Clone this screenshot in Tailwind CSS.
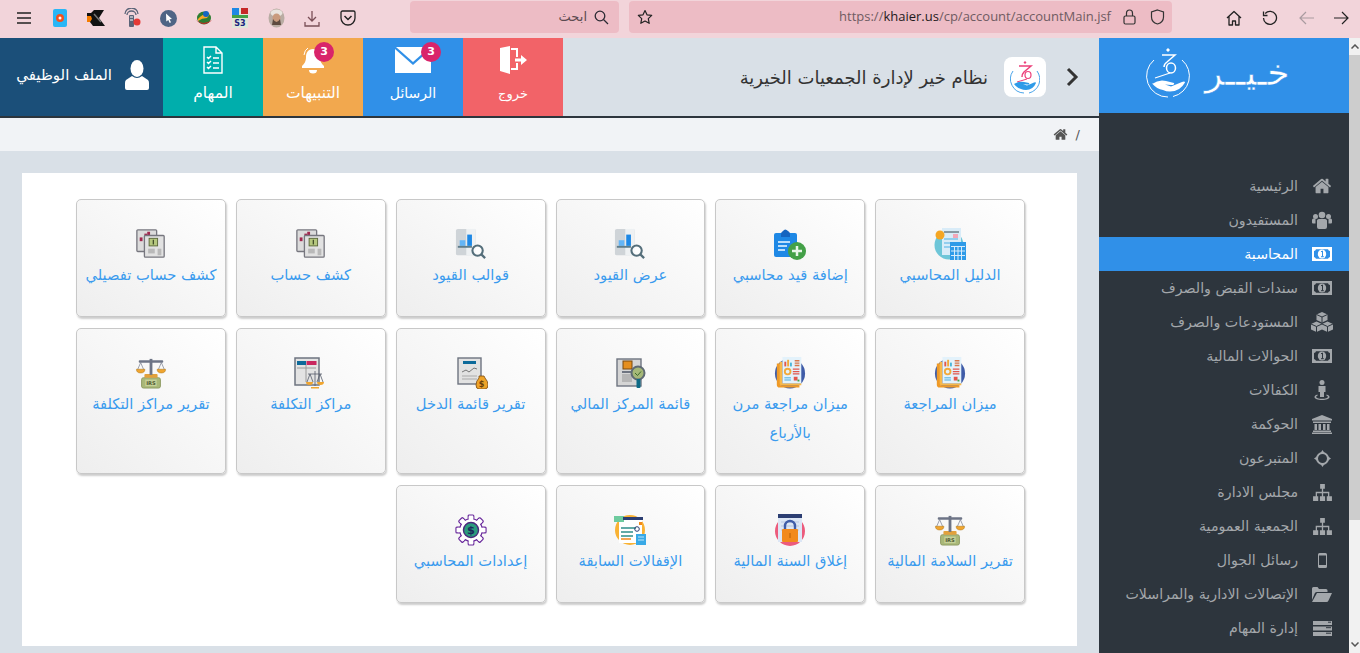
<!DOCTYPE html>
<html lang="ar">
<head>
    <meta charset="UTF-8">
    <title>نظام خير لإدارة الجمعيات الخيرية</title>
    <script src="https://cdn.jsdelivr.net/npm/@tailwindcss/browser@4"></script>
</head>
<body class="[font-family:'DejaVu_Sans',sans-serif] bg-[#d9e0e7]">

<!-- shared icons -->
<svg class="hidden">
    <symbol id="i-home" viewBox="0 0 1792 1792"><path fill="currentColor" d="M1472 992v480q0 26-19 45t-45 19h-384v-384h-256v384h-384q-26 0-45-19t-19-45v-480q0-1 .5-3t.5-3l575-474 575 474q1 2 1 6zm223-69l-62 74q-8 9-21 11h-3q-13 0-21-7l-692-577-692 577q-12 8-24 7-13-2-21-11l-62-74q-8-10-7-23.5t11-21.5l719-599q32-26 76-26t76 26l244 204v-195q0-14 9-23t23-9h192q14 0 23 9t9 23v408l219 182q10 8 11 21.5t-7 23.5z"/></symbol>
    <symbol id="i-money" viewBox="0 0 20 14"><path fill="currentColor" fill-rule="evenodd" d="M0 0h20v14H0zM4 2.2Q3.6 3.6 2 4v6q1.6.4 2 1.800h12q.4-1.400 2-1.800V4q-1.600-.4-2-1.800z"/><ellipse cx="10" cy="7" rx="4.200" ry="4.600" fill="currentColor"/><path d="M9 4.800l1.500-.8v5.600M9 9.700h2.800" fill="none" stroke="#2d353d" stroke-width="1"/></symbol>
    <symbol id="i-sitemap" viewBox="0 0 20 18"><path fill="currentColor" d="M7.500 0h5v5h-5zM0 13h5.500v5H0zM7.250 13h5.500v5h-5.500zM14.500 13H20v5h-5.500zM9.300 5h1.400v3.300h6.500V13h-1.400V9.700h-5.100V13H9.300V9.700H4.200V13H2.800V8.300h6.500z"/></symbol>

    <symbol id="i-search-chart" viewBox="0 0 34 34">
        <rect x="1" y="1" width="21" height="28" rx="2" fill="#cfd4d8"/><rect x="12" y="1" width="10" height="28" fill="#eef1f3"/>
        <rect x="5" y="13" width="6" height="6" fill="#64b5f6"/><rect x="13" y="7" width="5" height="12" fill="#1e88e5"/>
        <rect x="3" y="19" width="15" height="2" fill="#607d8b"/>
        <circle cx="24" cy="24" r="5.500" fill="#fff" fill-opacity=".7" stroke="#546e7a" stroke-width="2.200"/><path d="M28 28l4 4" stroke="#546e7a" stroke-width="2.400"/>
    </symbol>
    <symbol id="i-statement" viewBox="0 0 34 34">
        <rect x="2" y="2" width="21" height="23" rx="1" fill="#dcdcdc" stroke="#77777f" stroke-width="1.400"/>
        <rect x="5" y="10" width="3" height="4" fill="#a2284e"/><rect x="10" y="6" width="3" height="3" fill="#a2284e"/><rect x="13" y="4" width="3" height="4" fill="#a2284e"/>
        <rect x="10" y="8" width="21" height="23" rx="1" fill="#e2e2e2" stroke="#77777f" stroke-width="1.400"/>
        <rect x="15" y="11" width="9" height="8" fill="#b5c77e" stroke="#5c6a3b"/><path d="M19.500 12.500v5" stroke="#44502a" stroke-width="1.400"/>
        <rect x="14" y="22" width="7" height="5" fill="#b9b9b9"/><rect x="24" y="22" width="4" height="7" fill="#b9b9b9"/>
    </symbol>
    <symbol id="i-balance" viewBox="0 0 34 34">
        <circle cx="17" cy="17.500" r="16" fill="#3f5ca8"/>
        <path d="M3 7h4v23h20v2.500H6a3 3 0 0 1-3-3z" fill="#ef9a27"/><path d="M6 5h3v23h20v2H8a2 2 0 0 1-2-2z" fill="#f7b84a"/>
        <rect x="9" y="0" width="20" height="28" fill="#e3f2fb"/>
        <rect x="11" y="5" width="2" height="5" fill="#e2574c"/><rect x="14" y="3" width="2" height="7" fill="#f2a93b"/><rect x="17" y="6" width="2" height="4" fill="#4db6d9"/>
        <path d="M22 4h5M22 6.500h5M22 9h5" stroke="#d9774a" stroke-width="1.500"/>
        <circle cx="14.500" cy="15.500" r="3" fill="none" stroke="#f2a93b" stroke-width="2"/>
        <path d="M20 13h7M20 15.500h7M20 18h7" stroke="#e2574c" stroke-width="1.300"/>
        <path d="M11 22h7M11 24.500h7" stroke="#7cc4ea" stroke-width="1.500"/>
        <rect x="21" y="21" width="4" height="4" fill="#e2574c"/><rect x="25" y="24" width="2" height="2" fill="#43a047"/>
    </symbol>
    <symbol id="i-scale-irs" viewBox="0 0 34 34">
        <rect x="7" y="22" width="20" height="11" rx="2" fill="#a9b878" stroke="#8d9a62"/><rect x="11" y="24" width="12" height="7" fill="#c6d199"/>
        <text x="17" y="30" font-size="5.500" font-weight="700" text-anchor="middle" fill="#4c5630" font-family="'DejaVu Sans'">IRS</text>
        <rect x="10" y="18" width="14" height="4" rx="1" fill="#e2a13b"/>
        <rect x="15.500" y="2" width="3" height="17" fill="#6d7486"/><rect x="4" y="3.500" width="26" height="2.500" rx="1" fill="#6d7486"/>
        <path d="M6 6l-3.500 8M6 6l3.500 8M28 6l-3.500 8M28 6l3.500 8" stroke="#6d7486" stroke-width=".7"/>
        <path d="M1.500 13h9a4.500 4 0 0 1-9 0zM23.500 13h9a4.500 4 0 0 1-9 0z" fill="#f0a52f" stroke="#a86f12" stroke-width=".5"/>
    </symbol>
</svg>

<div class="w-[1360px] h-[653px] overflow-hidden flex flex-col">

    <!-- browser toolbar -->
    <div class="h-[38px] bg-[#f2d4da] flex items-start shrink-0 text-[#2b2a33]">
        <div class="w-[410px] shrink-0 h-[36px] flex items-center pl-[6px]">
            <div class="w-[36px] flex justify-center">
                <svg width="14" height="12" viewBox="0 0 14 12"><path d="M0 1h14M0 6h14M0 11h14" stroke="#222" stroke-width="1.400"/></svg>
            </div>
            <div class="w-[36px] flex justify-center">
                <svg width="14" height="18" viewBox="0 0 14 18"><rect width="14" height="18" rx="2" fill="#29b6f6"/><circle cx="7" cy="9" r="4" fill="#f4511e"/><circle cx="7" cy="9" r="1.500" fill="#fff"/></svg>
            </div>
            <div class="w-[36px] flex justify-center">
                <svg width="18" height="18" viewBox="0 0 18 18"><path d="M0 4h4l3-3h10l-5 8 6 8H6l-3-4H0z" fill="#111"/><path d="M0 7h4l1 3-2 3H0z" fill="#f57c00"/><path d="M7 5l7 8" stroke="#777" stroke-width="1.500"/></svg>
            </div>
            <div class="w-[36px] flex justify-center">
                <svg width="17" height="20" viewBox="0 0 17 20"><path d="M1 6a6.500 6 0 0 1 13 0M3 7a4.500 4 0 0 1 9 0" fill="none" stroke="#5b6478" stroke-width="1.300"/><rect x="5" y="7" width="5" height="12" rx="1" fill="#5b6478"/><path d="M6 9h3M6 12h3" stroke="#fff"/><circle cx="13" cy="14" r="3.500" fill="#e53935"/></svg>
            </div>
            <div class="w-[36px] flex justify-center">
                <svg width="17" height="17" viewBox="0 0 17 17"><circle cx="8.500" cy="8.500" r="8.500" fill="#4f6485"/><path d="M6 3.500l6 5.500-2.500.3 1.500 3-1.300.6-1.400-3-2 1.700z" fill="#fff"/></svg>
            </div>
            <div class="w-[36px] flex justify-center">
                <svg width="18" height="16" viewBox="0 0 18 16"><ellipse cx="9" cy="8" rx="7" ry="6.500" fill="#2e7d32"/><path d="M3 9q5-6 12-5l-3 4q-5 0-9 3z" fill="#f9a825"/><circle cx="11" cy="4" r="3" fill="#1565c0"/><path d="M1 10q7 6 16 0-8 8-16 0z" fill="#c62828"/></svg>
            </div>
            <div class="w-[36px] flex justify-center">
                <svg width="16" height="20" viewBox="0 0 16 20"><rect width="16" height="20" fill="#dfe6d8"/><rect x="0" y="0" width="7" height="7" fill="#1e88e5"/><rect x="9" y="0" width="7" height="6" fill="#c62828"/><rect x="0" y="7" width="16" height="3" fill="#43a047"/><text x="8" y="18" font-size="8" font-weight="700" text-anchor="middle" fill="#1a237e" font-family="'DejaVu Sans'">S3</text></svg>
            </div>
            <div class="w-[36px] flex justify-center">
                <svg width="17" height="20" viewBox="0 0 17 20"><ellipse cx="8.500" cy="10" rx="8" ry="9.500" fill="#b9aca3"/><ellipse cx="8.500" cy="5" rx="6" ry="3.500" fill="#e9e4de"/><ellipse cx="8.500" cy="10" rx="4" ry="4.500" fill="#c99b7d"/><path d="M5 11q3.500 6 7 0l1 6H4z" fill="#5e4a3f"/></svg>
            </div>
            <div class="w-[36px] flex justify-center">
                <svg width="16" height="17" viewBox="0 0 16 17"><path d="M8 1v10M4 7l4 4 4-4M1 12v4h14v-4" fill="none" stroke="#7a4f57" stroke-width="1.300"/></svg>
            </div>
            <div class="w-[36px] flex justify-center">
                <svg width="16" height="16" viewBox="0 0 16 16"><path d="M1 2.500A1.500 1.500 0 0 1 2.500 1h11A1.500 1.500 0 0 1 15 2.500V8a7 7 0 0 1-14 0z" fill="none" stroke="#222" stroke-width="1.300"/><path d="M4.500 6L8 9.500 11.500 6" fill="none" stroke="#222" stroke-width="1.500"/></svg>
            </div>
        </div>

        <div dir="rtl" class="w-[209px] shrink-0 h-[32px] mt-[1px] bg-[#edbcc5] rounded-[4px] flex items-center pr-[10px] gap-[7px]">
            <svg width="15" height="15" viewBox="0 0 15 15"><circle cx="6" cy="6" r="4.800" fill="none" stroke="#2b2a33" stroke-width="1.300"/><path d="M9.500 9.500L14 14" stroke="#2b2a33" stroke-width="1.300"/></svg>
            <span class="text-[13px] text-[#5c4a50]">ابحث</span>
        </div>

        <div class="w-[543px] shrink-0 h-[32px] mt-[1px] ml-[10px] bg-[#edbcc5] rounded-[4px] flex items-center pl-[8px] pr-[7px]">
            <svg width="16" height="16" viewBox="0 0 16 16"><path d="M8 1.500l2 4.300 4.700.6-3.400 3.200.9 4.700L8 12l-4.200 2.300.9-4.700L1.300 6.400 6 5.800z" fill="none" stroke="#222" stroke-width="1.200" stroke-linejoin="round"/></svg>
            <span class="ml-auto text-[13px] text-[#6f5b62] [font-family:'Open_Sans',sans-serif]">https://<span class="text-[#1f1a1c]">khaier.us</span>/cp/account/accountMain.jsf</span>
            <svg class="ml-[12px]" width="13" height="16" viewBox="0 0 13 16"><rect x="1" y="7" width="11" height="8" rx="1.500" fill="none" stroke="#333" stroke-width="1.200"/><path d="M3.500 7V4a3 3 0 0 1 6 0v3" fill="none" stroke="#333" stroke-width="1.200"/></svg>
            <svg class="ml-[14px]" width="15" height="16" viewBox="0 0 15 16"><path d="M7.500 1l6 2v5c0 3.500-2.500 6-6 7-3.500-1-6-3.500-6-7V3z" fill="none" stroke="#333" stroke-width="1.200"/></svg>
        </div>

        <div class="flex-1 h-[36px] flex items-center pl-[43px]">
            <div class="w-[37px] flex justify-center">
                <svg width="16" height="16" viewBox="0 0 16 16"><path d="M1 8l7-6.500L15 8M3 6.500V15h3.500v-4h3v4H13V6.500" fill="none" stroke="#222" stroke-width="1.300" stroke-linejoin="round"/></svg>
            </div>
            <div class="w-[36px] flex justify-center">
                <svg width="16" height="16" viewBox="0 0 16 16"><path d="M3.200 3.500A6.500 6.500 0 1 1 1.500 8M1.500 1.500v4h4" fill="none" stroke="#222" stroke-width="1.300"/></svg>
            </div>
            <div class="w-[36px] flex justify-center">
                <svg width="15" height="14" viewBox="0 0 15 14"><path d="M15 7H1M7 1L1 7l6 6" fill="none" stroke="#a99ba0" stroke-width="1.200"/></svg>
            </div>
            <div class="w-[35px] flex justify-center">
                <svg width="15" height="14" viewBox="0 0 15 14"><path d="M0 7h14M8 1l6 6-6 6" fill="none" stroke="#222" stroke-width="1.200"/></svg>
            </div>
        </div>
    </div>

    <div dir="rtl" class="flex-1 flex min-h-0">

        <!-- page scrollbar -->
        <div class="order-first w-[11px] shrink-0 bg-[#f1f1f1] flex flex-col">
            <div class="h-[17px] bg-[#f1f1f1] flex items-center justify-center">
                <svg width="8" height="5" viewBox="0 0 8 5"><path d="M.5 4.500L4 1l3.500 3.500" fill="none" stroke="#555" stroke-width="1.500"/></svg>
            </div>
            <div class="h-[465px] bg-[#cdcdcd]"></div>
            <div class="mt-auto h-[17px] flex items-center justify-center">
                <svg width="8" height="5" viewBox="0 0 8 5"><path d="M.5.500L4 4 7.500.500" fill="none" stroke="#555" stroke-width="1.500"/></svg>
            </div>
        </div>

        <!-- sidebar -->
        <aside class="w-[250px] shrink-0 bg-[#2d353d] flex flex-col overflow-hidden">
            <div dir="ltr" class="h-[75px] bg-[#3090e8] flex items-center gap-[15px] shrink-0 text-white pl-[47px]">
                <svg class="mb-[6px]" width="44" height="50" viewBox="0 0 44 50">
                    <path d="M8 12A21 21 0 0 0 22 49M36 12A21 21 0 0 1 27 48.500" fill="none" stroke="#fff" stroke-width="1"/>
                    <path d="M22 0l2 2-2 2-2-2z" fill="#fff"/>
                    <path d="M16 7h13l-8 7q-3 2-3 5" fill="none" stroke="#fff" stroke-width="1.500"/>
                    <ellipse cx="25" cy="20" rx="4.500" ry="5" fill="none" stroke="#fff" stroke-width="1.500"/>
                    <path d="M24 25L9 30" stroke="#fff" stroke-width="1.200"/>
                    <path d="M6 36q7-5 14-3l8 2q1 2-3 2l-6-.5 6 2 11-4.500q3-1 3 .5-5 9-15 9-4 0-7-1.500-6-1-11-6.500z" fill="#fff"/>
                </svg>
                <span dir="rtl" class="text-[36px] leading-none mb-[6px] [-webkit-text-stroke:0.4px_#3090e8]">خـيــر</span>
            </div>
            <nav class="pt-[56px] text-[14.2px] text-[#a3a7ab]">
                <a class="h-[34px] flex items-center">
                    <span class="w-[51px] pr-[3px] flex justify-center"><svg width="20" height="20"><use href="#i-home"/></svg></span>
                    <span class="pt-[1px]">الرئيسية</span>
                </a>
                <a class="h-[34px] flex items-center">
                    <span class="w-[51px] pr-[3px] flex justify-center"><svg width="20" height="20" viewBox="0 0 20 20" fill="currentColor"><circle cx="10" cy="5" r="3.300"/><circle cx="3.500" cy="6.500" r="2.500"/><circle cx="16.500" cy="6.500" r="2.500"/><path d="M5 11.500a2 2 0 0 1 2-2.500h6a2 2 0 0 1 2 2.500V17q0 2-2 2H7q-2 0-2-2zM0 10q0-1.500 1.500-1.500h2v5H1q-1 0-1-1zM20 10q0-1.500-1.500-1.500h-2v5H19q1 0 1-1z"/></svg></span>
                    <span class="pt-[1px]">المستفيدون</span>
                </a>
                <a class="h-[34px] flex items-center bg-[#3090e8] text-white">
                    <span class="w-[51px] pr-[3px] flex justify-center"><svg width="20" height="14" viewBox="0 0 20 14"><path fill="#fff" fill-rule="evenodd" d="M0 0h20v14H0zM4 2.200Q3.600 3.600 2 4v6q1.600.4 2 1.800h12q.4-1.400 2-1.800V4q-1.600-.4-2-1.800z"/><ellipse cx="10" cy="7" rx="4.200" ry="4.600" fill="#fff"/><path d="M9 4.800l1.500-.8v5.600M9 9.700h2.800" fill="none" stroke="#3090e8"/></svg></span>
                    <span class="pt-[1px]">المحاسبة</span>
                </a>
                <a class="h-[34px] flex items-center">
                    <span class="w-[51px] pr-[3px] flex justify-center"><svg width="20" height="14"><use href="#i-money"/></svg></span>
                    <span class="pt-[1px]">سندات القبض والصرف</span>
                </a>
                <a class="h-[34px] flex items-center">
                    <span class="w-[51px] pr-[3px] flex justify-center"><svg width="22" height="20" viewBox="0 0 22 20" fill="currentColor"><path d="M11 0l5.500 2.500V8L11 10.500 5.500 8V2.500zM5.500 9.500L11 12v5.500L5.500 20 0 17.500V12zM16.500 9.500L22 12v5.500L16.500 20 11 17.500V12z"/><path d="M5.500 2.500L11 5l5.500-2.500M11 5v5.500M0 12l5.500 2.500L11 12M5.500 14.500V20M11 12l5.500 2.500L22 12M16.500 14.500V20" fill="none" stroke="#2d353d"/></svg></span>
                    <span class="pt-[1px]">المستودعات والصرف</span>
                </a>
                <a class="h-[34px] flex items-center">
                    <span class="w-[51px] pr-[3px] flex justify-center"><svg width="20" height="14"><use href="#i-money"/></svg></span>
                    <span class="pt-[1px]">الحوالات المالية</span>
                </a>
                <a class="h-[34px] flex items-center">
                    <span class="w-[51px] pr-[3px] flex justify-center"><svg width="16" height="20" viewBox="0 0 16 20" fill="currentColor"><circle cx="8" cy="2.500" r="2.500"/><path d="M4.500 6h7v6h-1.500v5h-4v-5H4.500z"/><path d="M3.500 14.500C1.500 15 .5 16 .5 17c0 1.800 3.500 3 7.500 3s7.500-1.200 7.500-3c0-1-1-2-3-2.500v1.300c1 .3 1.500.7 1.500 1.200 0 .8-2.500 1.800-6 1.800s-6-1-6-1.800c0-.5.500-.9 1.500-1.200z"/></svg></span>
                    <span class="pt-[1px]">الكفالات</span>
                </a>
                <a class="h-[34px] flex items-center">
                    <span class="w-[51px] pr-[3px] flex justify-center"><svg width="20" height="19" viewBox="0 0 20 19" fill="currentColor"><path d="M10 0l10 4v1.500H0V4zM1 6.500h18V8H1zM2.500 9h2.500v6H2.500zM6.500 9H9v6H6.500zM11 9h2.500v6H11zM15 9h2.500v6H15zM1 15.500h18V17H1zM0 17.500h20V19H0z"/></svg></span>
                    <span class="pt-[1px]">الحوكمة</span>
                </a>
                <a class="h-[34px] flex items-center">
                    <span class="w-[51px] pr-[3px] flex justify-center"><svg width="17" height="17" viewBox="0 0 17 17" fill="none"><circle cx="8.500" cy="8.500" r="5.500" stroke="currentColor" stroke-width="2"/><path d="M8.500 0l2.200 3.200H6.300zM8.500 17l2.200-3.200H6.300zM0 8.500l3.200-2.200v4.400zM17 8.500l-3.200-2.200v4.400z" fill="currentColor"/></svg></span>
                    <span class="pt-[1px]">المتبرعون</span>
                </a>
                <a class="h-[34px] flex items-center">
                    <span class="w-[51px] pr-[3px] flex justify-center"><svg width="19" height="17"><use href="#i-sitemap"/></svg></span>
                    <span class="pt-[1px]">مجلس الادارة</span>
                </a>
                <a class="h-[34px] flex items-center">
                    <span class="w-[51px] pr-[3px] flex justify-center"><svg width="19" height="17"><use href="#i-sitemap"/></svg></span>
                    <span class="pt-[1px]">الجمعية العمومية</span>
                </a>
                <a class="h-[34px] flex items-center">
                    <span class="w-[51px] pr-[3px] flex justify-center"><svg width="9" height="15" viewBox="0 0 9 15"><path fill="currentColor" fill-rule="evenodd" d="M1.500 0h6Q9 0 9 1.500v12Q9 15 7.500 15h-6Q0 15 0 13.500v-12Q0 0 1.500 0zM1 2.500V12h7V2.500z"/></svg></span>
                    <span class="pt-[1px]">رسائل الجوال</span>
                </a>
                <a class="h-[34px] flex items-center">
                    <span class="w-[51px] pr-[3px] flex justify-center"><svg width="20" height="15" viewBox="0 0 20 15" fill="currentColor"><path d="M0 13V1.500Q0 0 1.500 0h4L7 2h7q1.500 0 1.500 1.500V5H5Q3.500 5 2.800 6.200z"/><path d="M5 6h15l-3.500 7.500q-.6 1.500-2 1.500H0z"/></svg></span>
                    <span class="pt-[1px]">الإتصالات الادارية والمراسلات</span>
                </a>
                <a class="h-[34px] flex items-center">
                    <span class="w-[51px] pr-[3px] flex justify-center"><svg width="19" height="15" viewBox="0 0 19 15" fill="currentColor"><path d="M0 0h19v4H0zM0 5.500h19v4H0zM0 11h19v4H0z"/><path d="M15 1.200h3M13 6.700h5M13 12.200h5" stroke="#2d353d"/></svg></span>
                    <span class="pt-[1px]">إدارة المهام</span>
                </a>
            </nav>
        </aside>

        <!-- main column -->
        <div class="flex-1 min-w-0 flex flex-col">
            <header class="h-[80px] shrink-0 flex bg-[#d9e0e7] border-b-2 border-[#2d353d]">
                <div class="flex items-center pr-[20px]">
                    <svg width="14" height="20" viewBox="0 0 14 20"><path d="M3 2l8 8-8 8" fill="none" stroke="#333" stroke-width="3"/></svg>
                    <div class="mr-[19px] w-[42px] h-[40px] bg-white rounded-[8px] flex items-center justify-center">
                        <svg width="30" height="33" viewBox="0 0 30 33">
                            <path d="M15 0l1.500 1.500L15 3l-1.500-1.500z" fill="#ec407a"/>
                            <path d="M9 5h12l-7 6q-2 2-2 5" fill="none" stroke="#ec407a" stroke-width="1.500"/>
                            <ellipse cx="18" cy="14" rx="3" ry="3.500" fill="none" stroke="#ec407a" stroke-width="1.200"/>
                            <path d="M17 18L7 21" stroke="#ec407a"/>
                            <path d="M3 10a14 14 0 0 0 11 22M27 10a14 14 0 0 1-8 22" fill="none" stroke="#4aa5ea"/>
                            <path d="M4 23q5-3 10-2l5 1q1 1.500-2 1.500l-4-.5 4 1.500 7-3q2-.5 2 .5-3 7-10 7-3 0-5-1-4-1-7-5z" fill="#2f9be8"/>
                        </svg>
                    </div>
                    <span class="mr-[16px] text-[18px] text-[#333]">نظام خير لإدارة الجمعيات الخيرية</span>
                </div>

                <a class="mr-auto w-[100px] bg-[#f26368] text-white flex flex-col items-center pt-[8px]">
                    <svg class="h-[28px]" width="27" height="28" viewBox="0 0 27 28" fill="#fff"><path d="M0 2l10-2v28L0 25zM11 2h7v9h-2V4h-5zM16 17h2v7h-7v-2h5z"/><path d="M15 12.500h6V9l6 5-6 5v-3.500h-6z"/></svg>
                    <span class="mt-[10px] text-[13px] leading-[20px]">خروج</span>
                </a>
                <a class="relative w-[100px] bg-[#3090e8] text-white flex flex-col items-center pt-[8px]">
                    <svg class="h-[28px]" width="36" height="26" viewBox="0 0 36 26" fill="#fff"><path d="M0 2v24h36V2L18 18z"/><path d="M1 0h34L18 15z"/></svg>
                    <span class="absolute top-[4px] right-[22px] w-[20px] h-[20px] rounded-full bg-[#d9246a] text-[11px] font-bold flex items-center justify-center">3</span>
                    <span class="mt-[9px] text-[14px] leading-[20px]">الرسائل</span>
                </a>
                <a class="relative w-[100px] bg-[#f2a84e] text-white flex flex-col items-center pt-[8px]">
                    <svg class="h-[28px]" width="24" height="28" viewBox="0 0 24 28" fill="#fff"><path d="M12 3c5 0 7 4 7 8 0 5 2 7 4 9v2H1v-2c2-2 4-4 4-9 0-4 2-8 7-8z"/><path d="M8 24h8a4 3.500 0 0 1-8 0z"/><path d="M3 9q.5-5 4-7" fill="none" stroke="#fff"/></svg>
                    <span class="absolute top-[4px] right-[29px] w-[20px] h-[20px] rounded-full bg-[#d9246a] text-[11px] font-bold flex items-center justify-center">3</span>
                    <span class="mt-[9px] text-[15.5px] leading-[20px]">التنبيهات</span>
                </a>
                <a class="w-[100px] bg-[#00aeac] text-white flex flex-col items-center pt-[8px]">
                    <svg class="h-[28px]" width="20" height="28" viewBox="0 0 20 28" fill="none" stroke="#fff" stroke-width="1.400"><path d="M1 1h12l6 6v20H1zM13 1v6h6"/><path d="M4 11l1.500 1.500L8 10M4 16l1.500 1.500L8 15M4 21l1.500 1.500L8 20M10 12h6M10 17h6M10 22h6"/></svg>
                    <span class="mt-[9px] text-[15.5px] leading-[20px]">المهام</span>
                </a>
                <a class="w-[163px] bg-[#1b4f79] text-white flex items-center pr-[14px] pb-[4px]">
                    <svg width="24" height="30" viewBox="0 0 24 30" fill="#fff"><ellipse cx="12" cy="8.500" rx="6.500" ry="8.500"/><path d="M7 16q5 4 10 0l6 4q1 1 1 3v5q0 2-2 2H2q-2 0-2-2v-5q0-2 1-3z"/></svg>
                    <span class="mr-[13px] text-[15px]">الملف الوظيفي</span>
                </a>
            </header>

            <div class="h-[33px] shrink-0 bg-[#f1f3f6] flex items-center pr-[19px] gap-[8px] text-[#555] text-[13px]">
                <span>/</span>
                <svg width="15" height="15" class="text-[#555]"><use href="#i-home"/></svg>
            </div>

            <main class="mx-[22px] mt-[22px] h-[473px] bg-white pt-[26px] pr-[52px]">
                <div class="w-[949px] grid grid-cols-6 gap-x-[10px] gap-y-[11px] text-[14.7px] leading-[29px] text-[#3a9bee] text-center">

                    <a class="flex flex-col items-center pt-[28px] pb-[27px] px-[2px] border border-[#c8c8c8] rounded-[5px] bg-linear-to-tr from-[#eeeeee] to-white shadow-[1px_2px_2px_rgba(0,0,0,0.2)]">
                        <svg width="34" height="32" viewBox="0 0 34 32"><circle cx="16" cy="17" r="14.500" fill="#6ec6d8"/><rect x="9" y="0" width="19" height="27" fill="#d9ecf8"/><path d="M11 4h15" stroke="#37474f"/><path d="M11 11h14M11 15h8M11 19h8" stroke="#7cc4ea" stroke-width="1.500"/><rect x="20" y="6" width="5" height="4" fill="#f3a6b8"/><circle cx="7" cy="7" r="4.500" fill="#f5a623"/><rect x="17" y="14" width="16" height="18" fill="#2f9be8"/><path d="M18 18.500h14M18 23h14M18 27.500h14M21.500 18.500V32M25 18.500V32M28.500 18.500V32" stroke="#d7ecfb"/></svg>
                        <span>الدليل المحاسبي</span>
                    </a>
                    <a class="flex flex-col items-center pt-[28px] pb-[27px] px-[2px] border border-[#c8c8c8] rounded-[5px] bg-linear-to-tr from-[#eeeeee] to-white shadow-[1px_2px_2px_rgba(0,0,0,0.2)]">
                        <svg width="34" height="32" viewBox="0 0 34 32"><rect x="1" y="5" width="23" height="24" rx="2" fill="#1e88e5"/><path d="M8 6q0-2 2-3 2-3 5 0 2 1 2 3v3H8z" fill="#1565c0"/><path d="M5 14h12M5 18h9M5 22h7" stroke="#bbdefb" stroke-width="2"/><circle cx="24" cy="23" r="9" fill="#43a047"/><path d="M24 18v10M19 23h10" stroke="#e8f5e9" stroke-width="2.500"/></svg>
                        <span>إضافة قيد محاسبي</span>
                    </a>
                    <a class="flex flex-col items-center pt-[28px] pb-[27px] px-[2px] border border-[#c8c8c8] rounded-[5px] bg-linear-to-tr from-[#eeeeee] to-white shadow-[1px_2px_2px_rgba(0,0,0,0.2)]">
                        <svg width="34" height="32" viewBox="0 0 34 32"><use href="#i-search-chart"/></svg>
                        <span>عرض القيود</span>
                    </a>
                    <a class="flex flex-col items-center pt-[28px] pb-[27px] px-[2px] border border-[#c8c8c8] rounded-[5px] bg-linear-to-tr from-[#eeeeee] to-white shadow-[1px_2px_2px_rgba(0,0,0,0.2)]">
                        <svg width="34" height="32" viewBox="0 0 34 32"><use href="#i-search-chart"/></svg>
                        <span>قوالب القيود</span>
                    </a>
                    <a class="flex flex-col items-center pt-[28px] pb-[27px] px-[2px] border border-[#c8c8c8] rounded-[5px] bg-linear-to-tr from-[#eeeeee] to-white shadow-[1px_2px_2px_rgba(0,0,0,0.2)]">
                        <svg width="34" height="32" viewBox="0 0 34 32"><use href="#i-statement"/></svg>
                        <span>كشف حساب</span>
                    </a>
                    <a class="flex flex-col items-center pt-[28px] pb-[27px] px-[2px] border border-[#c8c8c8] rounded-[5px] bg-linear-to-tr from-[#eeeeee] to-white shadow-[1px_2px_2px_rgba(0,0,0,0.2)]">
                        <svg width="34" height="32" viewBox="0 0 34 32"><use href="#i-statement"/></svg>
                        <span>كشف حساب تفصيلي</span>
                    </a>

                    <a class="flex flex-col items-center pt-[28px] pb-[27px] px-[2px] border border-[#c8c8c8] rounded-[5px] bg-linear-to-tr from-[#eeeeee] to-white shadow-[1px_2px_2px_rgba(0,0,0,0.2)]">
                        <svg width="34" height="32" viewBox="0 0 34 34"><use href="#i-balance"/></svg>
                        <span>ميزان المراجعة</span>
                    </a>
                    <a class="flex flex-col items-center pt-[28px] pb-[26px] px-[2px] border border-[#c8c8c8] rounded-[5px] bg-linear-to-tr from-[#eeeeee] to-white shadow-[1px_2px_2px_rgba(0,0,0,0.2)]">
                        <svg width="34" height="32" viewBox="0 0 34 34"><use href="#i-balance"/></svg>
                        <span>ميزان مراجعة مرن بالأرباع</span>
                    </a>
                    <a class="flex flex-col items-center pt-[28px] pb-[27px] px-[2px] border border-[#c8c8c8] rounded-[5px] bg-linear-to-tr from-[#eeeeee] to-white shadow-[1px_2px_2px_rgba(0,0,0,0.2)]">
                        <svg width="34" height="32" viewBox="0 0 34 32"><rect x="4" y="2" width="24" height="27" fill="#d5d5d5" stroke="#6e7480" stroke-width="1.400"/><rect x="10" y="4" width="9" height="8" fill="#e58f1f" stroke="#7a4a10"/><rect x="9" y="14" width="10" height="2" fill="#6e7480"/><rect x="9" y="17" width="10" height="8" fill="#b5b5b5"/><circle cx="25" cy="16" r="6.500" fill="#a5b878" stroke="#5f6a74" stroke-width="2"/><path d="M22 16l2.500 2.500 3.500-4" fill="none" stroke="#3f6a2c"/><rect x="23.500" y="22" width="4" height="9" rx="1" fill="#0d6a86"/></svg>
                        <span>قائمة المركز المالي</span>
                    </a>
                    <a class="flex flex-col items-center pt-[28px] pb-[27px] px-[2px] border border-[#c8c8c8] rounded-[5px] bg-linear-to-tr from-[#eeeeee] to-white shadow-[1px_2px_2px_rgba(0,0,0,0.2)]">
                        <svg width="34" height="32" viewBox="0 0 34 32"><rect x="4" y="1" width="23" height="26" fill="#e2e2e2" stroke="#6e7480" stroke-width="1.400"/><rect x="9" y="4" width="13" height="3" fill="#0d6a9a"/><path d="M8 15l4-2 3 2 5-4 3 1" fill="none" stroke="#777"/><path d="M8 19h15M8 22h15" stroke="#aaa"/><path d="M25 19h5l1 2q3 3 3 7 0 4-3 4h-6q-3 0-3-4 0-4 3-7z" fill="#eea328" stroke="#7a4a10" stroke-width=".8"/><text x="27.500" y="30" font-size="8" font-weight="700" text-anchor="middle" fill="#6a3f08" font-family="'DejaVu Sans'">$</text></svg>
                        <span>تقرير قائمة الدخل</span>
                    </a>
                    <a class="flex flex-col items-center pt-[28px] pb-[27px] px-[2px] border border-[#c8c8c8] rounded-[5px] bg-linear-to-tr from-[#eeeeee] to-white shadow-[1px_2px_2px_rgba(0,0,0,0.2)]">
                        <svg width="34" height="32" viewBox="0 0 34 32"><rect x="1" y="1" width="24" height="27" fill="#e3e3e3" stroke="#6e7480" stroke-width="1.500"/><rect x="3" y="4" width="9" height="4" fill="#0d6a9a"/><rect x="12.500" y="4" width="10" height="4" fill="#c9275f"/><path d="M12 8v17M3 11h19" stroke="#9a9a9a"/><path d="M21 14v15M14 17h14M16 17l-3 8M16 17l3 8M26 17l-3 8M26 17l3 8" stroke="#555c6a" stroke-width=".8" fill="none"/><path d="M12 25h7a3.500 3 0 0 1-7 0zM23 25h7a3.500 3 0 0 1-7 0zM17 30h8v1.500h-8z" fill="#f0a52f"/></svg>
                        <span>مراكز التكلفة</span>
                    </a>
                    <a class="flex flex-col items-center pt-[28px] pb-[27px] px-[2px] border border-[#c8c8c8] rounded-[5px] bg-linear-to-tr from-[#eeeeee] to-white shadow-[1px_2px_2px_rgba(0,0,0,0.2)]">
                        <svg width="34" height="32" viewBox="0 0 34 34"><use href="#i-scale-irs"/></svg>
                        <span>تقرير مراكز التكلفة</span>
                    </a>

                    <a class="flex flex-col items-center pt-[28px] pb-[27px] px-[2px] border border-[#c8c8c8] rounded-[5px] bg-linear-to-tr from-[#eeeeee] to-white shadow-[1px_2px_2px_rgba(0,0,0,0.2)]">
                        <svg width="34" height="32" viewBox="0 0 34 34"><use href="#i-scale-irs"/></svg>
                        <span>تقرير السلامة المالية</span>
                    </a>
                    <a class="flex flex-col items-center pt-[28px] pb-[27px] px-[2px] border border-[#c8c8c8] rounded-[5px] bg-linear-to-tr from-[#eeeeee] to-white shadow-[1px_2px_2px_rgba(0,0,0,0.2)]">
                        <svg width="34" height="32" viewBox="0 0 34 32"><circle cx="17" cy="17" r="15" fill="#ec5b7c"/><rect x="5" y="0" width="24" height="28" fill="#dce6f5"/><rect x="5" y="0" width="24" height="4" fill="#2c3e72"/><path d="M8 8h18M8 12h18M8 16h18" stroke="#b7c6e2"/><path d="M12 16v-4a5 5 0 0 1 10 0v4" fill="none" stroke="#3f5ca8" stroke-width="2.400"/><rect x="9" y="15" width="16" height="13" rx="1" fill="#f28a1c"/><path d="M17 19v5" stroke="#b65f06"/></svg>
                        <span>إغلاق السنة المالية</span>
                    </a>
                    <a class="flex flex-col items-center pt-[28px] pb-[27px] px-[2px] border border-[#c8c8c8] rounded-[5px] bg-linear-to-tr from-[#eeeeee] to-white shadow-[1px_2px_2px_rgba(0,0,0,0.2)]">
                        <svg width="34" height="32" viewBox="0 0 34 32"><circle cx="17" cy="16" r="15" fill="#f9b233"/><rect x="6" y="3" width="23" height="26" fill="#fff"/><rect x="1" y="2" width="10" height="6" fill="#6ecb9e"/><rect x="10" y="3" width="20" height="3" fill="#2c3e72"/><rect x="26" y="8" width="3" height="3" fill="#f28a1c"/><path d="M8 14h15M8 18h12M8 22h12" stroke="#2f8f8a" stroke-width="1.500"/><circle cx="24" cy="15" r="2.300" fill="none" stroke="#2c3e72"/><path d="M8 25h10" stroke="#f28a1c" stroke-width="1.500"/><rect x="23" y="20" width="10" height="11" fill="#39a9e6"/><path d="M25 23h6M25 26h6" stroke="#bfe4f8"/></svg>
                        <span>الإقفالات السابقة</span>
                    </a>
                    <a class="flex flex-col items-center pt-[28px] pb-[27px] px-[2px] border border-[#c8c8c8] rounded-[5px] bg-linear-to-tr from-[#eeeeee] to-white shadow-[1px_2px_2px_rgba(0,0,0,0.2)]">
                        <svg width="34" height="32" viewBox="0 0 34 34">
                            <g fill="#fff" stroke="#6a2a9c" stroke-width="1.200">
                                <rect x="14" y="1" width="6" height="32" rx="1"/>
                                <rect x="14" y="1" width="6" height="32" rx="1" transform="rotate(45 17 17)"/>
                                <rect x="14" y="1" width="6" height="32" rx="1" transform="rotate(90 17 17)"/>
                                <rect x="14" y="1" width="6" height="32" rx="1" transform="rotate(135 17 17)"/>
                            </g>
                            <circle cx="17" cy="17" r="12" fill="#fff" stroke="#6a2a9c" stroke-width="1.200"/>
                            <g fill="#fff">
                                <rect x="14.600" y="3" width="4.800" height="28"/>
                                <rect x="14.600" y="3" width="4.800" height="28" transform="rotate(45 17 17)"/>
                                <rect x="14.600" y="3" width="4.800" height="28" transform="rotate(90 17 17)"/>
                                <rect x="14.600" y="3" width="4.800" height="28" transform="rotate(135 17 17)"/>
                            </g>
                            <circle cx="17" cy="17" r="8" fill="#2b9c7d" stroke="#4a2a7c" stroke-width="1.500"/>
                            <text x="17" y="21.500" font-size="12" font-weight="700" text-anchor="middle" fill="#1c2a5c" font-family="'DejaVu Sans'">$</text>
                        </svg>
                        <span>إعدادات المحاسبي</span>
                    </a>
                </div>
            </main>
        </div>
    </div>
</div>
</body>
</html>
